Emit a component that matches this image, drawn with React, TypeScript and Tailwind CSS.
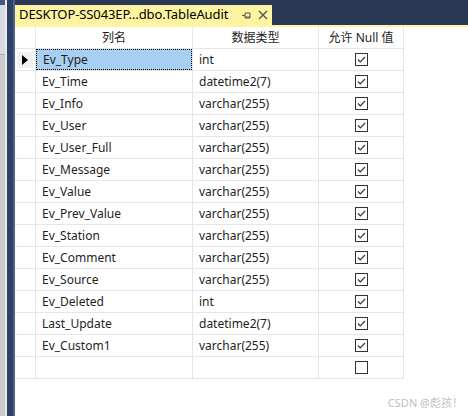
import React from 'react';

const rows: [string, string][] = [
  ['Ev_Type', 'int'],
  ['Ev_Time', 'datetime2(7)'],
  ['Ev_Info', 'varchar(255)'],
  ['Ev_User', 'varchar(255)'],
  ['Ev_User_Full', 'varchar(255)'],
  ['Ev_Message', 'varchar(255)'],
  ['Ev_Value', 'varchar(255)'],
  ['Ev_Prev_Value', 'varchar(255)'],
  ['Ev_Station', 'varchar(255)'],
  ['Ev_Comment', 'varchar(255)'],
  ['Ev_Source', 'varchar(255)'],
  ['Ev_Deleted', 'int'],
  ['Last_Update', 'datetime2(7)'],
  ['Ev_Custom1', 'varchar(255)'],
];

function CheckBox({ checked }: { checked: boolean }) {
  return (
    <div className="w-[13px] h-[13px] border border-[#333333] bg-white flex items-center justify-center">
      {checked && (
        <svg width="11" height="11" viewBox="0 0 11 11">
          <path d="M2 5.5 L4.3 7.8 L9 3" fill="none" stroke="#333333" strokeWidth="1.2" />
        </svg>
      )}
    </div>
  );
}

function Row({ name, type, selected, empty }: { name: string; type: string; selected?: boolean; empty?: boolean }) {
  return (
    <div className="flex h-[22px]">
      <div className="w-[21px] border-r border-b border-[#e6e6e6] flex items-center justify-center">
        {selected && (
          <div className="w-[16px] h-[16px] bg-[#f0f0f0] flex items-center justify-center">
            <svg width="6" height="10" viewBox="0 0 6 10">
              <path d="M0 0 L6 5 L0 10 Z" fill="#000" />
            </svg>
          </div>
        )}
      </div>
      <div className="w-[157px] border-r border-b border-[#e6e6e6] flex">
        <div
          className={`flex-1 flex items-center pl-[6px] ${
            selected ? 'bg-[#a7cff2] border border-dotted border-black' : ''
          }`}
        >
          {name}
        </div>
      </div>
      <div className="w-[126px] border-r border-b border-[#e6e6e6] flex items-center pl-[6px]">{type}</div>
      <div className="w-[85px] border-r border-b border-[#e6e6e6] flex items-center justify-center">
        <CheckBox checked={!empty} />
      </div>
    </div>
  );
}

export default function App() {
  return (
    <div
      className="w-[468px] h-[416px] flex bg-white overflow-hidden text-[12px] text-[#1e1e1e]"
      style={{ fontFamily: '"Noto Sans", "Noto Sans CJK SC", sans-serif' }}
    >
      <div className="w-[15px] flex shrink-0">
        <div className="w-[5px] bg-[#cbcbcb] flex flex-col">
          <div className="h-[5px] bg-[#4a5878]" />
          <div className="h-[50px] bg-[#d7dae0] border-b border-[#a6adbb]" />
        </div>
        <div className="w-[2px] bg-[#e9e9ef]" />
        <div className="w-[6px] bg-[#2e4063]" />
        <div className="w-[2px] bg-[#4c6190]" />
      </div>
      <div className="flex-1 flex flex-col">
        <div className="h-[25px] bg-[#293955] flex items-end">
          <div className="h-[20px] w-[257px] bg-[#fdf4a1] flex items-center pl-[4px] text-[13px] text-black">
            <span className="tracking-[-0.1px]">DESKTOP-SS043EP...dbo.TableAudit</span>
            <span className="ml-auto mr-[4px] flex items-center gap-[6px]">
              <svg width="11" height="11" viewBox="0 0 11 11">
                <path d="M1 5.5 H4 M4 3 V8 M4 3 H9 V8 H4 M4 7 H9" fill="none" stroke="#555" strokeWidth="1" />
              </svg>
              <svg width="10" height="10" viewBox="0 0 10 10">
                <path d="M1 1 L9 9 M9 1 L1 9" stroke="#555" strokeWidth="1.4" />
              </svg>
            </span>
          </div>
        </div>
        <div className="h-[2px] bg-[#fdf4a1]" />
        <div className="flex flex-col">
          <div className="flex h-[22px]">
            <div className="w-[21px] border-r border-b border-[#e6e6e6]" />
            <div className="w-[157px] border-r border-b border-[#e6e6e6] flex items-center justify-center">列名</div>
            <div className="w-[126px] border-r border-b border-[#e6e6e6] flex items-center justify-center">数据类型</div>
            <div className="w-[85px] border-r border-b border-[#e6e6e6] flex items-center justify-center">
              允许 Null 值
            </div>
          </div>
          {rows.map(([n, t], i) => (
            <Row key={n} name={n} type={t} selected={i === 0} />
          ))}
          <Row name="" type="" empty />
        </div>
        <div className="mt-auto mb-[5px] mr-[5px] self-end text-[11px] text-[#c0c0c0]">CSDN @彪孩！</div>
      </div>
    </div>
  );
}
